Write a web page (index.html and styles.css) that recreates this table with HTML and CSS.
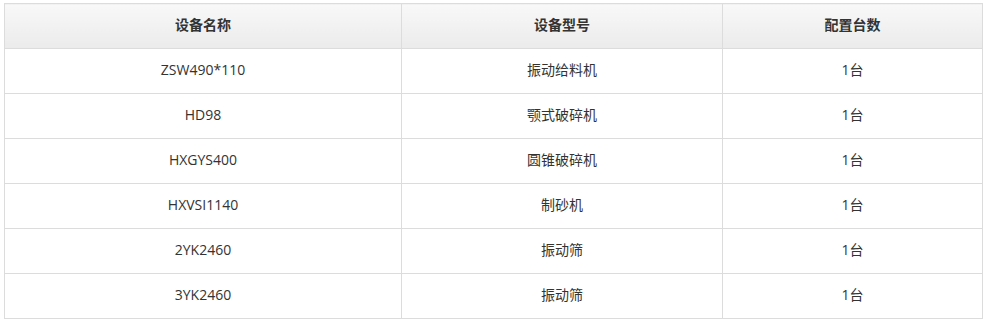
FILE: index.html
```html
<!DOCTYPE html>
<html lang="zh-CN">
<head>
<meta charset="utf-8">
<title>设备配置</title>
<link rel="stylesheet" href="styles.css">
</head>
<body>
<table class="equip">
  <colgroup>
    <col class="c1"><col class="c2"><col class="c3">
  </colgroup>
  <thead>
    <tr><th>设备名称</th><th>设备型号</th><th>配置台数</th></tr>
  </thead>
  <tbody>
    <tr><td>ZSW490*110</td><td>振动给料机</td><td>1台</td></tr>
    <tr><td>HD98</td><td>颚式破碎机</td><td>1台</td></tr>
    <tr><td>HXGYS400</td><td>圆锥破碎机</td><td>1台</td></tr>
    <tr><td>HXVSI1140</td><td>制砂机</td><td>1台</td></tr>
    <tr><td>2YK2460</td><td>振动筛</td><td>1台</td></tr>
    <tr><td>3YK2460</td><td>振动筛</td><td>1台</td></tr>
  </tbody>
</table>
</body>
</html>
```

FILE: styles.css
```css
html, body {
  margin: 0;
  padding: 0;
  background: #fff;
}
body {
  padding: 3px 0 0 4px;
  font-family: "Open Sans", "Noto Sans CJK SC", sans-serif;
  font-size: 14px;
  color: #333;
}
.equip {
  border-collapse: collapse;
  table-layout: fixed;
  width: 978px;
}
.c1 { width: 397px; }
.c2 { width: 321px; }
.c3 { width: 260px; }
.equip th,
.equip td {
  border: 1px solid #dcdcdc;
  height: 45px;
  padding: 0 0 3px;
  line-height: 20px;
  text-align: center;
  vertical-align: middle;
  box-sizing: border-box;
}
.equip th {
  font-weight: bold;
  color: #333;
  background: linear-gradient(to bottom, #f8f8f8, #ebebeb);
}
.equip td {
  background: #fff;
}
```
